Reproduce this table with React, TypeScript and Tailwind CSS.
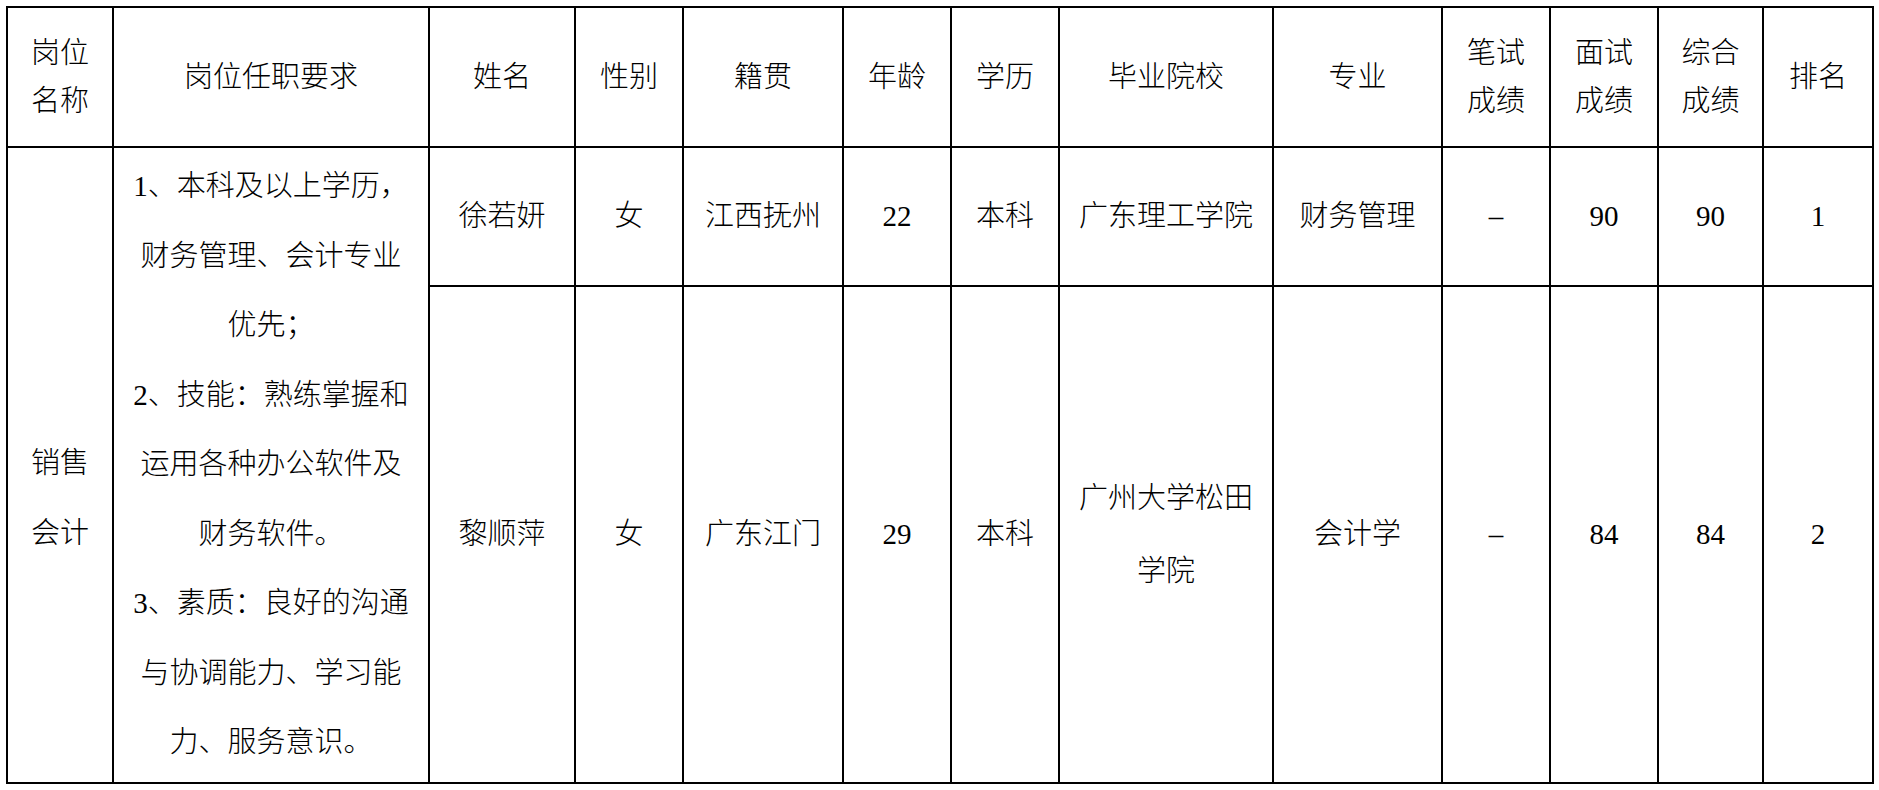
import React from "react";

const FONT = { fontFamily: '"Liberation Serif", "Noto Sans CJK SC", serif' };

const headers: string[][] = [
  ["岗位", "名称"],
  ["岗位任职要求"],
  ["姓名"],
  ["性别"],
  ["籍贯"],
  ["年龄"],
  ["学历"],
  ["毕业院校"],
  ["专业"],
  ["笔试", "成绩"],
  ["面试", "成绩"],
  ["综合", "成绩"],
  ["排名"],
];

const rows: string[][][] = [
  [["徐若妍"], ["女"], ["江西抚州"], ["22"], ["本科"], ["广东理工学院"], ["财务管理"], ["–"], ["90"], ["90"], ["1"]],
  [["黎顺萍"], ["女"], ["广东江门"], ["29"], ["本科"], ["广州大学松田", "学院"], ["会计学"], ["–"], ["84"], ["84"], ["2"]],
];

const requirement = [
  "1、本科及以上学历，",
  "财务管理、会计专业",
  "优先；",
  "2、技能：熟练掌握和",
  "运用各种办公软件及",
  "财务软件。",
  "3、素质：良好的沟通",
  "与协调能力、学习能",
  "力、服务意识。",
];

function Lines({ lines, leading }: { lines: string[]; leading: string }) {
  return (
    <div className={`flex flex-col items-center ${leading}`}>
      {lines.map((l, i) => (
        <div key={i} className="whitespace-nowrap">
          {l}
        </div>
      ))}
    </div>
  );
}

export default function App() {
  return (
    <div className="w-[1879px] h-[790px] bg-white text-black font-light" style={FONT}>
      <div className="ml-[6px] pt-[6px]">
        <div className="grid w-fit bg-black p-[2px] gap-[2px] text-[29px] grid-cols-[104px_314px_144px_106px_158px_106px_106px_212px_167px_106px_106px_103px_108px] grid-rows-[138px_137px_495px]">
          {headers.map((h, i) => (
            <div key={`h${i}`} className="bg-white flex items-center justify-center text-center">
              <Lines lines={h} leading="leading-[48px]" />
            </div>
          ))}

          <div className="row-span-2 bg-white flex items-center justify-center text-center pt-[67px]">
            <Lines lines={["销售", "会计"]} leading="leading-[69.5px]" />
          </div>
          <div className="row-span-2 bg-white flex items-center justify-center text-center">
            <Lines lines={requirement} leading="leading-[69.5px]" />
          </div>

          {rows.map((r, ri) =>
            r.map((c, ci) => (
              <div key={`r${ri}c${ci}`} className="bg-white flex items-center justify-center text-center">
                <Lines lines={c} leading={c.length > 1 ? "leading-[73px]" : "leading-[69.5px]"} />
              </div>
            ))
          )}
        </div>
      </div>
    </div>
  );
}
